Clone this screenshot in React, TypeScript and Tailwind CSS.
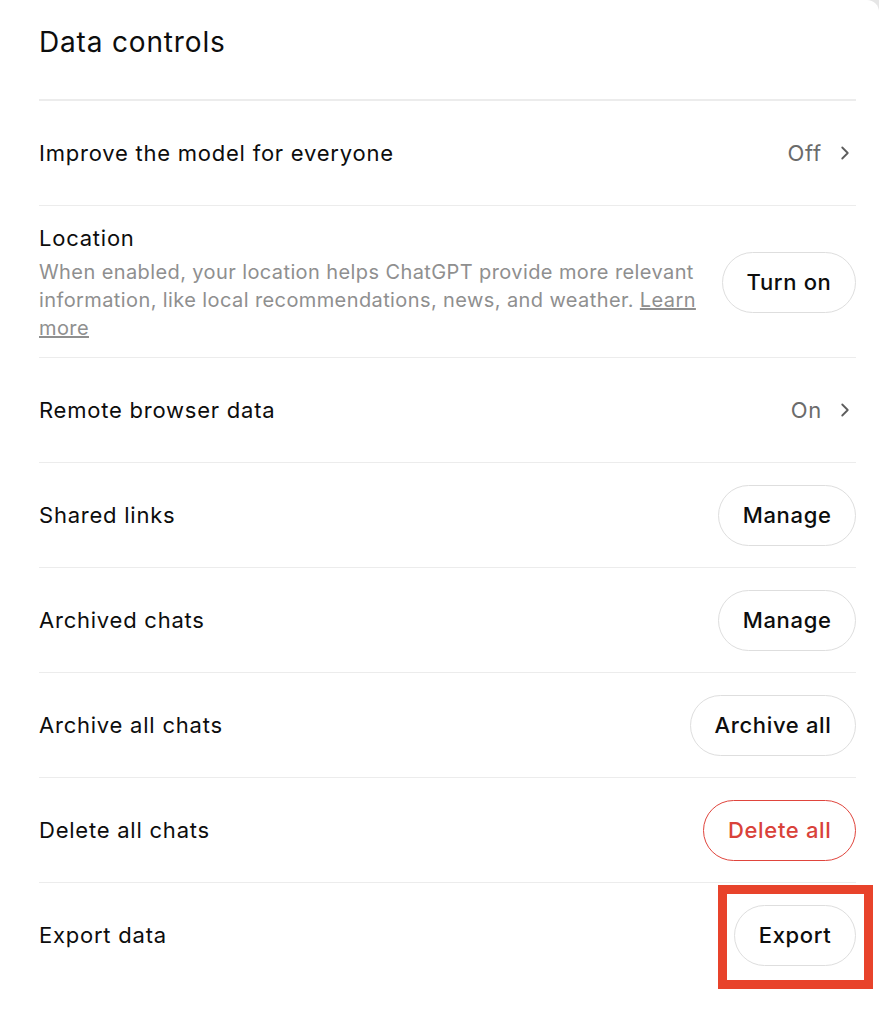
import { FC, ReactNode } from 'react';
import { ChevronRight } from 'lucide-react';

const font = { fontFamily: 'Inter, "Liberation Sans", sans-serif' };

interface RowProps {
  label: string;
  children?: ReactNode;
  last?: boolean;
}

const Row: FC<RowProps> = ({ label, children, last }) => (
  <div className={`flex items-center justify-between min-h-[105px] ${last ? '' : 'border-b border-[#ececec]'}`}>
    <span className="text-[22px] tracking-[0.035em] text-[#0d0d0d]">{label}</span>
    {children}
  </div>
);

const PillButton: FC<{ label: string; danger?: boolean }> = ({ label, danger }) => (
  <button
    className={`shrink-0 whitespace-nowrap h-[61px] rounded-full px-[23.5px] text-[22px] tracking-[0.03em] font-medium bg-white ${
      danger ? 'border border-[#e0453d] text-[#d9423a]' : 'border border-[#dedede] text-[#0d0d0d]'
    }`}
  >
    {label}
  </button>
);

const Status: FC<{ value: string }> = ({ value }) => (
  <div className="flex items-center gap-[12px] text-[22px] tracking-[0.035em] text-[#6b6b6b]">
    <span>{value}</span>
    <ChevronRight className="w-[22px] h-[22px] text-[#5d5d5d]" strokeWidth={2} />
  </div>
);

export default function App() {
  return (
    <div className="w-full min-h-[1024px] bg-[#e6e6e6]" style={font}>
      <div className="relative w-full min-h-[1024px] bg-white rounded-tr-[12px] pl-[39px] pr-[23px]">
        <div className="h-[101px] pt-[22px] border-b-2 border-[#ececec]">
          <h1 className="text-[28px] leading-[40px] tracking-[0.03em] text-[#0d0d0d]">Data controls</h1>
        </div>

        <Row label="Improve the model for everyone">
          <Status value="Off" />
        </Row>

        <div className="flex items-center justify-between gap-4 pt-[17px] pb-[15px] border-b border-[#ececec]">
          <div className="w-[660px] shrink-0">
            <div className="text-[22px] leading-[30px] tracking-[0.035em] text-[#0d0d0d]">Location</div>
            <p className="mt-[5px] text-[20px] leading-[28px] tracking-[0.02em] text-[#8f8f8f]">
              When enabled, your location helps ChatGPT provide more relevant information, like local
              recommendations, news, and weather. <span className="underline">Learn</span>{' '}
              <span className="underline">more</span>
            </p>
          </div>
          <PillButton label="Turn on" />
        </div>

        <Row label="Remote browser data">
          <Status value="On" />
        </Row>
        <Row label="Shared links">
          <PillButton label="Manage" />
        </Row>
        <Row label="Archived chats">
          <PillButton label="Manage" />
        </Row>
        <Row label="Archive all chats">
          <PillButton label="Archive all" />
        </Row>
        <Row label="Delete all chats">
          <PillButton label="Delete all" danger />
        </Row>
        <Row label="Export data" last>
          <PillButton label="Export" />
        </Row>

        <div className="absolute left-[718px] top-[885px] w-[155px] h-[104px] border-[9px] border-[#e8432b]" />
      </div>
    </div>
  );
}
